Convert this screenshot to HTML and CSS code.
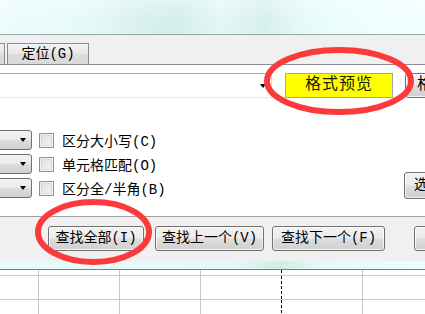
FILE: index.html
```html
<!DOCTYPE html>
<html lang="zh-CN">
<head>
<meta charset="utf-8">
<title>查找和替换</title>
<link rel="stylesheet" href="styles.css">
</head>
<body>
<div class="screen">
  <div class="titlebar"></div>
  <div class="tabstrip">
    <div class="tab tab-prev">替换(P)</div>
    <div class="tab">定位(G)</div>
  </div>
  <div class="panel">
    <div class="findrow">
      <div class="combo wide"><span class="arrow"></span></div>
      <div class="preview">格式预览</div>
      <div class="btn format">格式(M)...</div>
    </div>
    <div class="options">
      <div class="optcol">
        <div class="optrow"><div class="combo small"><span class="arrow"></span></div><span class="check"></span><span class="label">区分大小写(C)</span></div>
        <div class="optrow"><div class="combo small"><span class="arrow"></span></div><span class="check"></span><span class="label">单元格匹配(O)</span></div>
        <div class="optrow"><div class="combo small"><span class="arrow"></span></div><span class="check"></span><span class="label">区分全/半角(B)</span></div>
      </div>
      <div class="btn choose">选项(T) &lt;&lt;</div>
    </div>
  </div>
  <div class="btnbar">
    <div class="btn act b1">查找全部(I)</div>
    <div class="btn act b2">查找上一个(V)</div>
    <div class="btn act b3">查找下一个(F)</div>
    <div class="btn act b4">关闭</div>
  </div>
  <div class="strip"></div>
  <div class="sheet">
    <div class="cell"></div><div class="cell"></div><div class="cell"></div><div class="cell pb"></div><div class="cell"></div><div class="cell"></div>
    <div class="cell"></div><div class="cell"></div><div class="cell"></div><div class="cell pb"></div><div class="cell"></div><div class="cell"></div>
    <div class="cell"></div><div class="cell"></div><div class="cell"></div><div class="cell pb"></div><div class="cell"></div><div class="cell"></div>
  </div>
  <svg class="marks" width="425" height="314" viewBox="0 0 425 314">
    <ellipse cx="339" cy="81" rx="72" ry="31" fill="none" stroke="#fb3b3b" stroke-width="6"/>
    <ellipse cx="93.5" cy="232" rx="55.5" ry="30" fill="none" stroke="#fb3b3b" stroke-width="6"/>
  </svg>
</div>
</body>
</html>
```
FILE: styles.css
```css
* { box-sizing: border-box; }
html, body { margin: 0; padding: 0; }
body {
  width: 425px;
  height: 314px;
  overflow: hidden;
  background: #fff;
  color: #000;
  font: 14px "Liberation Mono", "Noto Sans CJK SC", monospace;
}
.screen {
  position: relative;
  width: 425px;
  height: 314px;
  overflow: hidden;
}
.titlebar {
  height: 35px;
  border-bottom: 1px solid #9ea3a8;
  background:
    linear-gradient(to bottom, rgba(255,255,255,0.35), rgba(255,255,255,0) 60%),
    linear-gradient(to right, #ecfcfc 0%, #e6f9f9 20%, #d9f1f0 32%, #d3eeec 42%, #e2f7f6 52%, #d6efed 62%, #e6fafa 72%, #eefefe 85%, #f0ffff 100%);
}
.tabstrip {
  height: 30px;
  background: #f0f0f0;
  border-bottom: 1px solid #898c95;
  display: flex;
  align-items: flex-end;
}
.tab {
  flex: none;
  width: 82px;
  height: 21px;
  border: 1px solid #898c95;
  border-bottom: none;
  background: linear-gradient(to bottom, #f3f3f3, #e6e6e6 50%, #dcdcdc 51%, #d9d9d9);
  text-align: center;
  line-height: 20px;
  white-space: nowrap;
  margin-left: 2px;
}
.tab-prev { margin-left: -77px; color: transparent; }
.panel {
  height: 144px;
  background: #fff;
  border-bottom: 1px solid #a0a0a0;
}
.findrow {
  display: flex;
  margin-top: 8px;
  height: 25px;
}
.combo {
  display: flex;
  align-items: center;
  justify-content: flex-end;
  flex: none;
}
.combo .arrow {
  width: 0;
  height: 0;
  border-left: 3.5px solid transparent;
  border-right: 3.5px solid transparent;
  border-top: 4px solid #000;
}
.combo.wide {
  width: 274px;
  height: 25px;
  margin-left: -2px;
  border: 1px solid #abadb3;
  border-right-color: #dbdfe6;
  border-bottom-color: #e3e9ef;
  padding-right: 5px;
}
.preview {
  flex: none;
  width: 108px;
  height: 25px;
  margin-left: 13px;
  background: #ffff00;
  border: 1px solid #a7a7a7;
  font-size: 16px;
  letter-spacing: 1px;
  line-height: 23px;
  text-align: center;
  color: #1a1a00;
  white-space: nowrap;
}
.btn {
  flex: none;
  border: 1px solid #707070;
  border-radius: 3px;
  background: linear-gradient(to bottom, #f2f2f2, #ebebeb 48%, #dddddd 52%, #cfcfcf);
  box-shadow: inset 0 0 0 1px rgba(255,255,255,0.75);
  text-align: center;
  white-space: nowrap;
  overflow: hidden;
}
.format {
  width: 90px;
  height: 25px;
  margin-left: 12px;
  font-size: 16px;
  line-height: 23px;
  text-align: left;
  padding-left: 11px;
}
.options {
  display: grid;
  grid-template-columns: 404px auto;
  align-items: end;
  margin-top: 32px;
}
.optcol {
  display: flex;
  flex-direction: column;
  gap: 4px;
}
.optrow {
  display: flex;
  align-items: center;
  height: 20px;
}
.combo.small {
  width: 34px;
  height: 20px;
  margin-left: -2px;
  border: 1px solid #707070;
  border-radius: 0 3px 3px 0;
  background: linear-gradient(to bottom, #f2f2f2, #ebebeb 48%, #dddddd 52%, #cfcfcf);
  padding-right: 5px;
}
.check {
  width: 15px;
  height: 15px;
  margin-left: 7px;
  border: 1px solid #8e8f8f;
  background: linear-gradient(135deg, #dcdcdc, #f6f6f6);
  box-shadow: inset 0 0 0 1px #f4f4f4, inset 0 0 0 2px #d8d8d8;
  flex: none;
}
.label {
  margin-left: 8px;
  white-space: nowrap;
}
.choose {
  width: 80px;
  height: 27px;
  line-height: 25px;
  text-align: left;
  padding-left: 9px;
  margin-bottom: -1px;
}
.btnbar {
  height: 44px;
  background: #f0f0f0;
  display: flex;
  align-items: flex-start;
  padding: 9px 0 0 48px;
}
.act {
  height: 25px;
  line-height: 23px;
}
.b1 { width: 96px; }
.b2 { width: 109px; margin-left: 11px; }
.b3 { width: 113px; margin-left: 8px; }
.b4 { width: 80px; margin-left: 29px; }
.strip {
  height: 9px;
  border-bottom: 1px solid #7b7f84;
  background: linear-gradient(to right, #e9fbfb 0%, #e4f9f8 55%, #cdeee7 66%, #e6faf9 76%, #ecfdfd 100%);
}
.sheet {
  display: grid;
  grid-template-columns: 39px 81px 81px 81px 81px 81px;
  grid-template-rows: 6px 24px 30px;
}
.cell {
  border-right: 1px solid #c8c8c8;
  border-bottom: 1px solid #c8c8c8;
}
.cell.pb {
  border-right: none;
  background: repeating-linear-gradient(to bottom, #000 0 3px, transparent 3px 5px) right top / 1px 100% no-repeat;
}
.marks {
  position: absolute;
  left: 0;
  top: 0;
  pointer-events: none;
}
```
